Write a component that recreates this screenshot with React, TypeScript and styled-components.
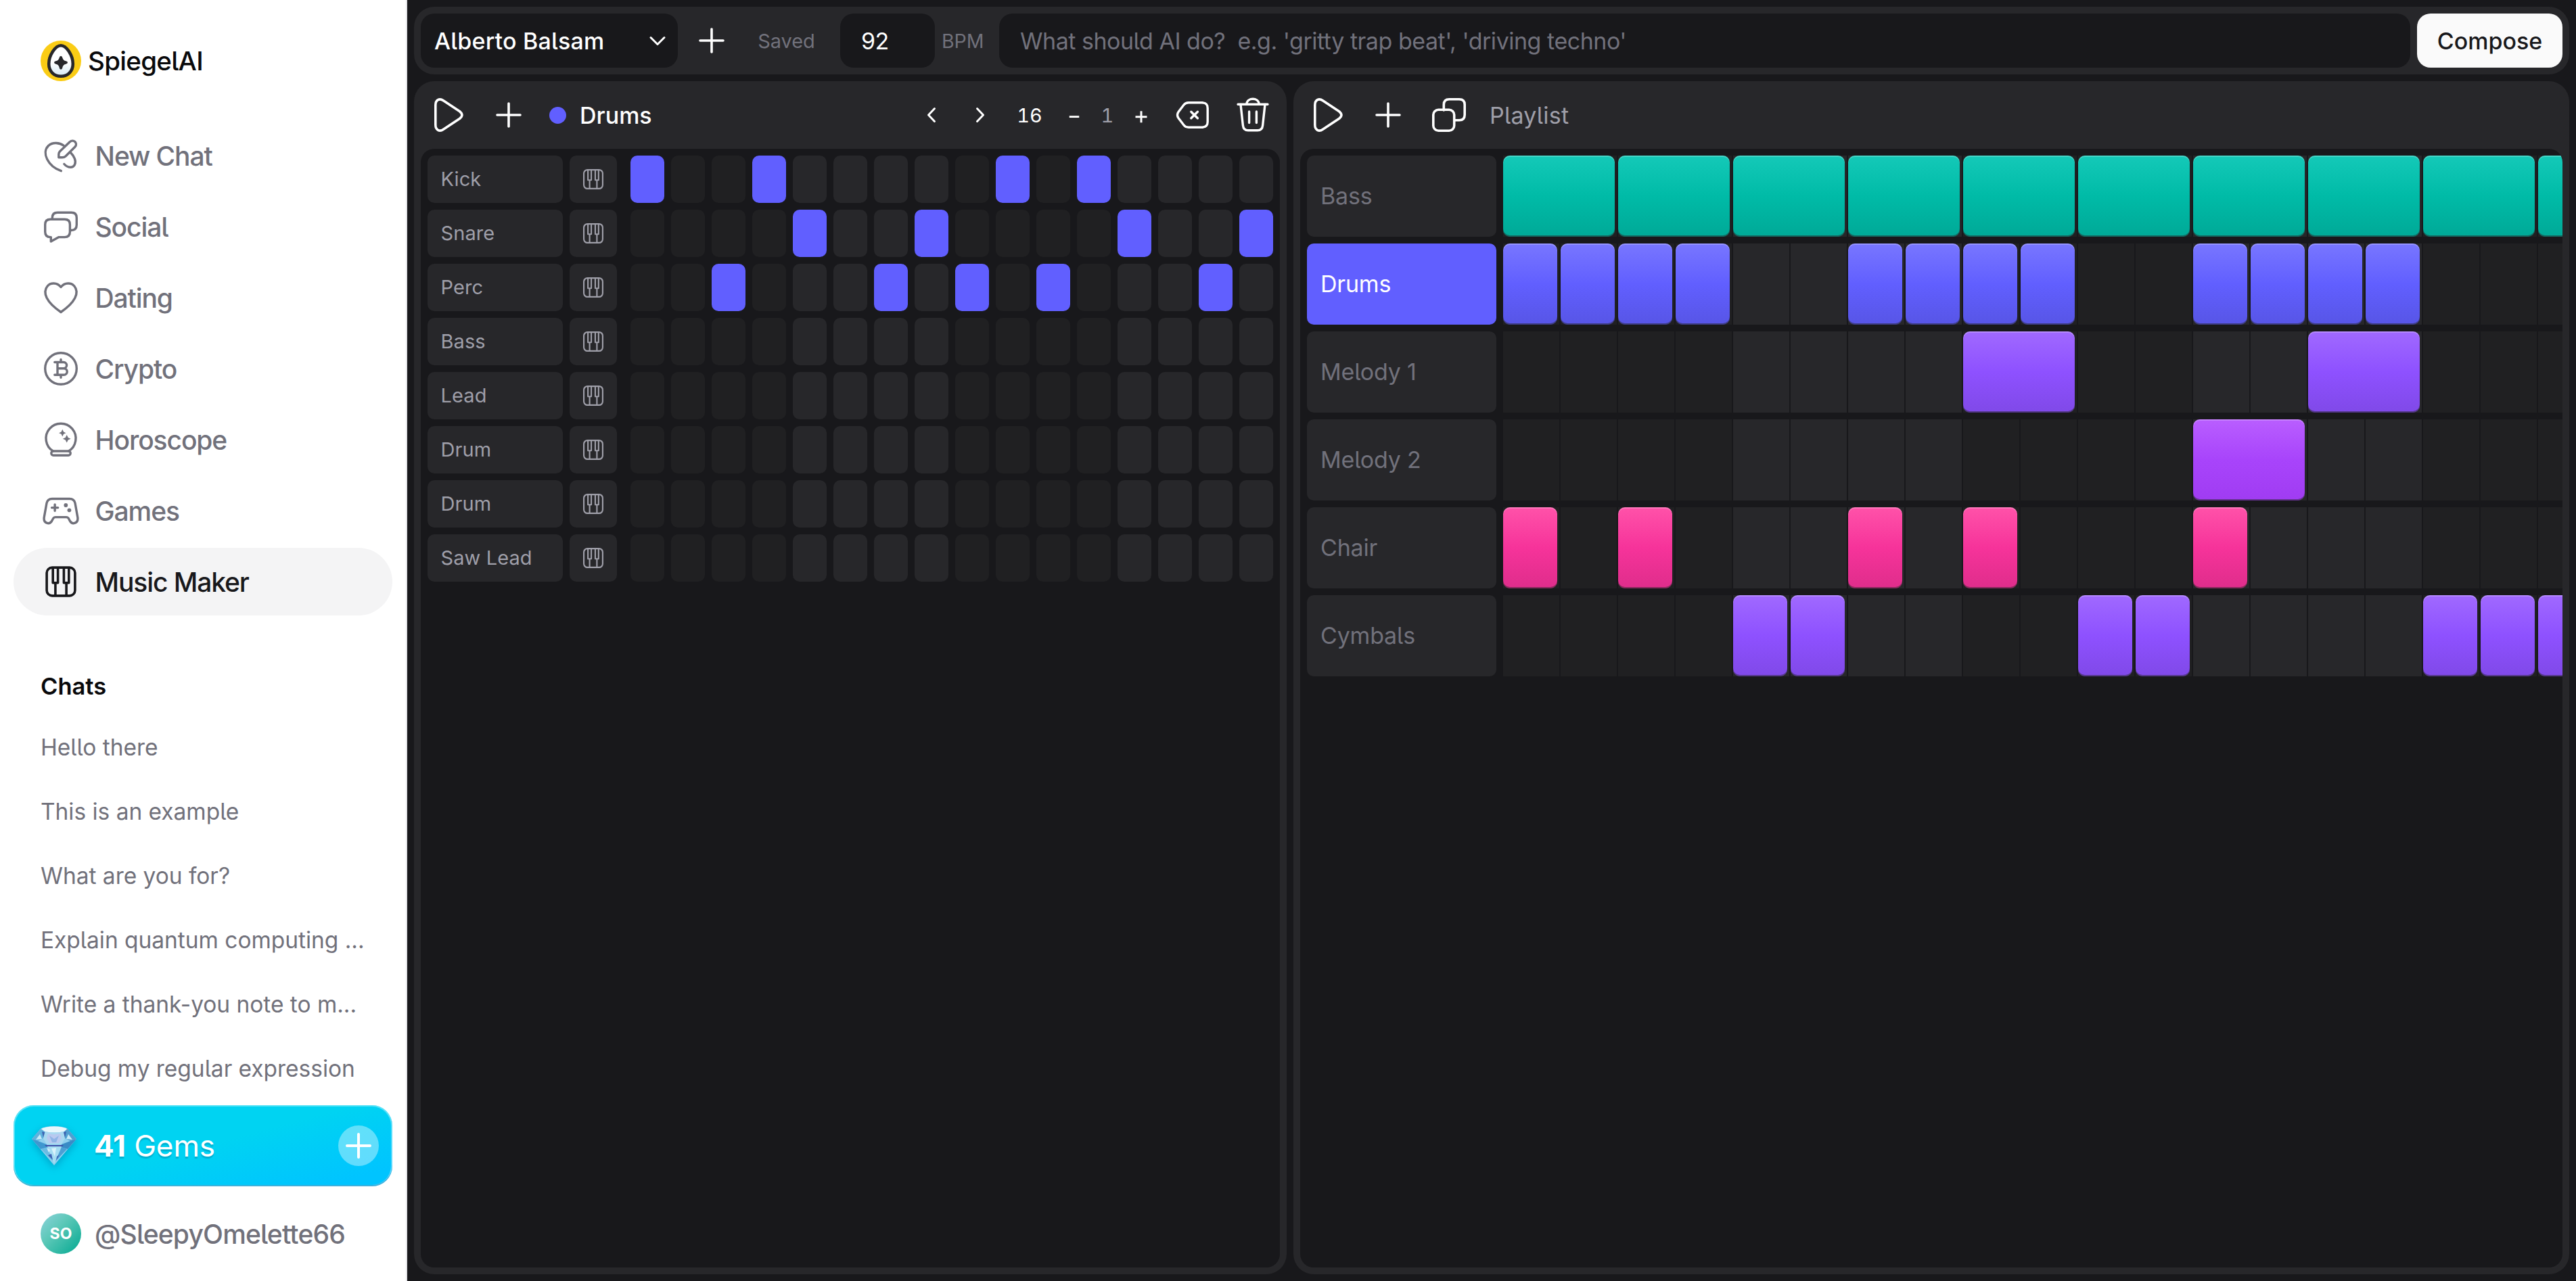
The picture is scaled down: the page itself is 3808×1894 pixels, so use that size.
import type { ReactNode } from 'react';
import styled, { createGlobalStyle, css } from 'styled-components';

const GlobalStyle = createGlobalStyle`
  * {
    box-sizing: border-box;
  }

  body {
    margin: 0;
    background: #18181b;
    font-family: Inter, 'Liberation Sans', sans-serif;
    font-feature-settings: 'cv05';
    -webkit-font-smoothing: antialiased;
  }

  button,
  input {
    font: inherit;
    font-feature-settings: inherit;
    border: 0;
    padding: 0;
    background: none;
    color: inherit;
  }
`;

/* ---------- icons ---------- */

const Icon = ({ size = 60, stroke = 3.4, children }: { size?: number; stroke?: number; children: ReactNode }) => (
  <svg
    width={size}
    height={size}
    viewBox="0 0 60 60"
    fill="none"
    stroke="currentColor"
    strokeWidth={stroke}
    strokeLinecap="round"
    strokeLinejoin="round"
  >
    {children}
  </svg>
);

const NewChatIcon = () => (
  <Icon>
    <path d="M34 15.2C28 11 18 9.5 11.5 15.5C1 26 11 46 30.3 52.7" />
    <path d="M26.8 32.8V28Q26.8 25.5 28.6 23.7L43.2 9.8C48.5 5 55.6 11.6 51 17L37 31Q35 32.8 32 32.8Z" />
    <path d="M44.7 26C49.7 31 53 38 50.5 43.3C48 49 40 48.5 34.8 42.5" />
  </Icon>
);

const SocialIcon = () => (
  <Icon>
    <path d="M17.3 19V17Q17.3 9.3 25 9.3H45.6Q53.3 9.3 53.3 17V27.5Q53.3 35.5 45 35.5" />
    <path d="M14.5 19.3H35.6Q43.4 19.3 43.4 27V37.8Q43.4 45.6 35.6 45.6H27L15.3 52V45.6H14.5Q6.7 45.6 6.7 37.8V27Q6.7 19.3 14.5 19.3Z" />
  </Icon>
);

const DatingIcon = () => (
  <Icon>
    <path d="M30 14.5C24 7 14.5 8 10.3 12.8C2 23 9 37 30 51.5C51 37 58 23 49.7 12.8C45.5 8 36 7 30 14.5Z" />
  </Icon>
);

const CryptoIcon = () => (
  <Icon>
    <circle cx="30" cy="30" r="23.3" />
    <path d="M20.8 20.5H34a4.6 4.6 0 0 1 0 9.2M25 20.5V39.3M25 29.8H34.5a4.75 4.75 0 0 1 0 9.5H20.8M30 16.5v4M30 39.3v4" />
  </Icon>
);

const HoroscopeIcon = () => (
  <Icon>
    <path d="M18.5 47A22 22 0 1 1 41.5 47" />
    <rect x="15.8" y="47" width="28.4" height="6.3" rx="3" />
    <path
      d="M32.3 14.8L34 18.6L37.5 20.2L34 21.8L32.3 25.6L30.6 21.8L27.1 20.2L30.6 18.6ZM38.7 22.9L40.7 26.9L44.6 28.7L40.7 30.5L38.7 34.5L36.7 30.5L32.8 28.7L36.7 26.9Z"
      fill="currentColor"
      stroke="none"
    />
  </Icon>
);

const GamesIcon = () => (
  <Icon>
    <path d="M17 12.5H43Q49.5 12.5 51 18.8L54.8 40C56 49 47 51 43.5 45.5L41.5 41.8Q40.3 39.6 38 39.6H22Q19.7 39.6 18.5 41.8L16.5 45.5C13 51 4 49 5.2 40L9 18.8Q10.5 12.5 17 12.5Z" />
    <path d="M16.5 25.6H25.7M21.1 21V30.2" />
    <circle cx="37.3" cy="22" r="2.9" fill="currentColor" stroke="none" />
    <circle cx="42.4" cy="29.3" r="2.9" fill="currentColor" stroke="none" />
  </Icon>
);

const PianoIcon = ({ size = 60, stroke = 3.6 }: { size?: number; stroke?: number }) => (
  <Icon size={size} stroke={stroke}>
    <rect x="9.1" y="9.1" width="41.8" height="41.8" rx="8" />
    <path d="M18.2 10V31.8H25.6V10M21.9 32V50M34.4 10V31.8H41.8V10M38.1 32V50" strokeLinecap="butt" />
  </Icon>
);

const PlusIcon = ({ stroke = 3.6 }: { stroke?: number }) => (
  <Icon stroke={stroke}>
    <path d="M13 30H47M30 13V47" />
  </Icon>
);

const PlayIcon = () => (
  <Icon stroke={3.6}>
    <path d="M11.8 15.5C11.8 7.8 17.6 4.6 23.5 8.7L47.3 24.5Q54.6 30 47.3 35.5L23.5 51.3C17.6 55.4 11.8 52.2 11.8 44.5Z" />
  </Icon>
);

const DuplicateIcon = () => (
  <Icon stroke={3.6}>
    <path d="M22.3 23V14.8Q22.3 6.8 30.3 6.8H45.2Q53.2 6.8 53.2 14.8V29.7Q53.2 37.7 45.2 37.7H38" />
    <rect x="6.8" y="22.3" width="30.9" height="30.9" rx="7.5" />
  </Icon>
);

const BackspaceIcon = () => (
  <Icon stroke={3.4}>
    <path d="M25 11.8H45Q53.2 11.8 53.2 20V40Q53.2 48.2 45 48.2H25Q20.5 48.2 18 45L10 34.5Q7 30 10 25.5L18 15Q20.5 11.8 25 11.8Z" />
    <path d="M28.8 25.2L38.4 34.8M38.4 25.2L28.8 34.8" />
  </Icon>
);

const TrashIcon = () => (
  <Icon stroke={3.4}>
    <path d="M8 14.3H52M20.8 13.5C21.8 3.8 38.2 3.8 39.2 13.5" />
    <path d="M12 14.5L15.4 45.5Q16.2 52.8 23 52.8H37Q43.8 52.8 44.6 45.5L48 14.5" />
    <path d="M24.6 25V41.5M35.4 25V41.5" />
  </Icon>
);

const ChevronIcon = ({ d }: { d: string }) => (
  <Icon size={60} stroke={3}>
    <path d={d} />
  </Icon>
);

const Logo = () => (
  <svg width="60" height="60" viewBox="0 0 60 60">
    <defs>
      <linearGradient id="egg" x1="0" y1="0" x2="0" y2="1">
        <stop offset="0.55" stopColor="#fff" />
        <stop offset="1" stopColor="#d5e9f3" />
      </linearGradient>
    </defs>
    <circle cx="30" cy="30" r="30" fill="#facc15" />
    <path
      d="M30 7.2C38.5 7.2 47.8 22.5 47.8 34.5C47.8 45.5 40 52.8 30 52.8C20 52.8 12.2 45.5 12.2 34.5C12.2 22.5 21.5 7.2 30 7.2Z"
      fill="url(#egg)"
      stroke="#27272a"
      strokeWidth="4.6"
    />
    <path
      d="M30 22.8Q31.8 22.8 32.4 25.6Q33.4 29.6 37.4 30.3Q40 30.9 40 32.5Q40 34.1 37.4 34.7Q33.4 35.4 32.4 39.4Q31.8 42.6 30 42.6Q28.2 42.6 27.6 39.4Q26.6 35.4 22.6 34.7Q20 34.1 20 32.5Q20 30.9 22.6 30.3Q26.6 29.6 27.6 25.6Q28.2 22.8 30 22.8Z"
      fill="#27272a"
    />
  </svg>
);

const GemSvg = styled.svg`
  display: block;
  overflow: visible;
  filter: drop-shadow(0 4px 6px rgba(0, 90, 140, 0.4));
`;

const Gem = () => (
  <GemSvg width="66" height="60" viewBox="0 0 66 60">
    <path d="M0 20L13 5Q20 1 33 1Q46 1 53 5L66 20L33 59Z" fill="#8fd0ee" />
    <path d="M0 20L13 5L20 9L17 19L9 23Z" fill="#5fb2dd" />
    <path d="M66 20L53 5L47 9L49 19L57 23Z" fill="#4f9fd0" />
    <path d="M14 5Q20 1.5 33 1.5Q46 1.5 52 5L48 9Q33 12 19 9Z" fill="#e8f7fc" />
    <path d="M20 9Q33 12 47 9L49 19L44 28H22L17 19Z" fill="#a9d8f0" />
    <path d="M24 12L33 13.5L42 12L44 19L40 26H26L22 19Z" fill="#b9c9ef" />
    <path d="M26 15L33 20L40 15L36 25H30Z" fill="#8fb4e6" />
    <path d="M0 20L9 23L22 28L24 32L13 35Z" fill="#3f97cf" />
    <path d="M66 20L57 23L44 28L43 32L53 35Z" fill="#3a8bc6" />
    <path d="M6 21L12 13L15 20ZM60 21L54 13L51 20Z" fill="#c6ecfa" />
    <path d="M15 9L19 10L17 18ZM51 9L47 10L49 18Z" fill="#3d62b0" />
    <path d="M19 29H47L45 31H21Z" fill="#3f4fa8" />
    <path d="M23 31H44L33 57Z" fill="#a5dcf2" />
    <path d="M14 35L23 32L31 53Z" fill="#6cbbe3" />
    <path d="M52 35L44 32L35 53Z" fill="#4c9fd4" />
    <path d="M24 44L29 42L31 51ZM41 43L37 46L36 52Z" fill="#3f62b4" />
    <path d="M29 34L36 33L34 46Z" fill="#d8f2fb" />
    <path d="M22 33L27 36L25 40Z" fill="#d3effa" />
  </GemSvg>
);

/* ---------- data ---------- */

const navItems = [
  { label: 'New Chat', icon: <NewChatIcon /> },
  { label: 'Social', icon: <SocialIcon /> },
  { label: 'Dating', icon: <DatingIcon /> },
  { label: 'Crypto', icon: <CryptoIcon /> },
  { label: 'Horoscope', icon: <HoroscopeIcon /> },
  { label: 'Games', icon: <GamesIcon /> },
  { label: 'Music Maker', icon: <PianoIcon />, active: true },
];

const chats = [
  'Hello there',
  'This is an example',
  'What are you for?',
  'Explain quantum computing ...',
  'Write a thank-you note to m...',
  'Debug my regular expression',
];

const steps = Array.from({ length: 16 }, (_, i) => i);

const instruments = [
  { name: 'Kick', on: [0, 3, 9, 11] },
  { name: 'Snare', on: [4, 7, 12, 15] },
  { name: 'Perc', on: [2, 6, 8, 10, 14] },
  { name: 'Bass', on: [] },
  { name: 'Lead', on: [] },
  { name: 'Drum', on: [] },
  { name: 'Drum', on: [] },
  { name: 'Saw Lead', on: [] },
];

const bars = Array.from({ length: 20 }, (_, i) => i);

// top, middle and bottom shade of a clip
const teal = ['#14c9b8', '#00bba7', '#00a997'];
const indigo = ['#7876ff', '#615fff', '#5755e6'];
const violet = ['#a069ff', '#8e51ff', '#8049e8'];
const purple = ['#b95eff', '#a844fb', '#a03cf2'];
const pink = ['#ff52a9', '#f6339a', '#df2d8b'];

const tracks = [
  { name: 'Bass', shades: teal, length: 2, at: [0, 2, 4, 6, 8, 10, 12, 14, 16, 18] },
  { name: 'Drums', shades: indigo, length: 1, at: [0, 1, 2, 3, 6, 7, 8, 9, 12, 13, 14, 15], active: true },
  { name: 'Melody 1', shades: violet, length: 2, at: [8, 14] },
  { name: 'Melody 2', shades: purple, length: 2, at: [12] },
  { name: 'Chair', shades: pink, length: 1, at: [0, 2, 6, 8, 12] },
  { name: 'Cymbals', shades: violet, length: 1, at: [4, 5, 10, 11, 16, 17, 18] },
];

/* ---------- page ---------- */

const App = () => {
  return (
    <Page>
      <GlobalStyle />
      <Sidebar>
        <Brand>
          <Logo />
          SpiegelAI
        </Brand>
        <Nav>
          {navItems.map((item) => (
            <NavItem $active={item.active} key={item.label}>
              {item.icon}
              {item.label}
            </NavItem>
          ))}
        </Nav>
        <ChatsTitle>Chats</ChatsTitle>
        <ChatList>
          {chats.map((chat) => (
            <ChatItem key={chat}>{chat}</ChatItem>
          ))}
        </ChatList>
        <GemsButton>
          <Gem />
          <GemsText>
            <b>41</b> Gems
          </GemsText>
          <GemsPlus>
            <PlusIcon stroke={4} />
          </GemsPlus>
        </GemsButton>
        <User>
          <Avatar>SO</Avatar>
          @SleepyOmelette66
        </User>
      </Sidebar>

      <Main>
        <Toolbar>
          <SongSelect>
            Alberto Balsam
            <ChevronIcon d="M20 25.5L30 35.5L40 25.5" />
          </SongSelect>
          <IconButton>
            <PlusIcon />
          </IconButton>
          <Saved>Saved</Saved>
          <BpmInput defaultValue="92" />
          <BpmLabel>BPM</BpmLabel>
          <Prompt placeholder={"What should AI do?\u00a0 e.g. 'gritty trap beat', 'driving techno'"} />
          <Compose>Compose</Compose>
        </Toolbar>

        <Panels>
          <Panel $width={1290}>
            <PanelHeader>
              <IconButton>
                <PlayIcon />
              </IconButton>
              <IconButton>
                <PlusIcon />
              </IconButton>
              <Dot />
              <PanelTitle $weight={500}>Drums</PanelTitle>
              <Controls>
                <Control $width={72}>
                  <ChevronIcon d="M34.5 20.5L25.5 30L34.5 39.5" />
                </Control>
                <Control $width={72}>
                  <ChevronIcon d="M25.5 20.5L34.5 30L25.5 39.5" />
                </Control>
                <Control $width={74}>16</Control>
                <Control $width={58}>
                  <Icon stroke={3}>
                    <path d="M22.5 32.7H37.5" strokeLinecap="butt" />
                  </Icon>
                </Control>
                <Control $width={40} $muted>
                  1
                </Control>
                <Control $width={60}>
                  <Icon stroke={3}>
                    <path d="M21.5 32.7H38.5M30 24.2V41.2" strokeLinecap="butt" />
                  </Icon>
                </Control>
              </Controls>
              <IconButton>
                <BackspaceIcon />
              </IconButton>
              <IconButton>
                <TrashIcon />
              </IconButton>
            </PanelHeader>
            <PanelBody>
              {instruments.map((row, r) => (
                <StepRow key={r}>
                  <Instrument>{row.name}</Instrument>
                  <PianoButton>
                    <PianoIcon size={40} stroke={3.2} />
                  </PianoButton>
                  {steps.map((i) => (
                    <Step $on={row.on.some((n) => n === i)} $bright={i % 8 > 3} key={i} />
                  ))}
                </StepRow>
              ))}
            </PanelBody>
          </Panel>

          <Panel>
            <PanelHeader>
              <IconButton>
                <PlayIcon />
              </IconButton>
              <IconButton>
                <PlusIcon />
              </IconButton>
              <IconButton>
                <DuplicateIcon />
              </IconButton>
              <PlaylistTitle>Playlist</PlaylistTitle>
            </PanelHeader>
            <PanelBody>
              {tracks.map((track) => (
                <TrackRow key={track.name}>
                  <TrackLabel $active={track.active}>{track.name}</TrackLabel>
                  <Lane>
                    {bars.map((i) => (
                      <Bar $bright={i % 8 > 3} $col={i + 1} key={i} />
                    ))}
                    {track.at.map((i) => (
                      <Clip $shades={track.shades} $col={i + 1} $span={track.length} key={i} />
                    ))}
                  </Lane>
                </TrackRow>
              ))}
            </PanelBody>
          </Panel>
        </Panels>
      </Main>
    </Page>
  );
};

const Page = styled.div`
  display: flex;
  width: 3808px;
  height: 1894px;
  overflow: hidden;
  background: #18181b;
`;

const Sidebar = styled.aside`
  display: flex;
  flex-direction: column;
  flex: none;
  width: 602px;
  padding: 60px 20px 40px;
  background: #fff;
  border-right: 2px solid #e4e4e7;
`;

const Brand = styled.div`
  display: flex;
  align-items: center;
  gap: 10px;
  height: 60px;
  padding-left: 40px;
  font-size: 38.5px;
  font-weight: 500;
  letter-spacing: -0.7px;
  color: #09090b;
`;

const Nav = styled.nav`
  display: flex;
  flex-direction: column;
  gap: 5px;
  margin-top: 60px;
`;

const NavItem = styled.a<{ $active?: boolean }>`
  display: flex;
  align-items: center;
  gap: 20.5px;
  height: 100px;
  padding-left: 40px;
  border-radius: 50px;
  font-size: 39px;
  font-weight: 500;
  letter-spacing: -1.1px;
  color: #71717b;

  ${(props) =>
    props.$active &&
    css`
      background: #f4f4f5;
      color: #18181b;
    `}
`;

const ChatsTitle = styled.h2`
  margin: 60px 0 0;
  padding-left: 40px;
  font-size: 34.5px;
  font-weight: 600;
  line-height: 90px;
  letter-spacing: 0;
  color: #09090b;
`;

const ChatList = styled.div`
  display: flex;
  flex-direction: column;
  flex: 1;
  gap: 5px;
  overflow: hidden;
`;

const ChatItem = styled.a`
  flex: none;
  padding-left: 40px;
  font-size: 33.5px;
  line-height: 90px;
  letter-spacing: -0.03px;
  white-space: nowrap;
  color: #71717b;
`;

const GemsButton = styled.button`
  display: flex;
  align-items: center;
  flex: none;
  height: 120px;
  padding: 0 20px 0 27px;
  border-radius: 30px;
  background: linear-gradient(165deg, #00d3f2 50%, #00c4ff 90%);
  box-shadow:
    inset 0 -2px 0 rgba(0, 80, 140, 0.3),
    inset 0 0 0 2px rgba(255, 255, 255, 0.35);
  color: #fff;
`;

const GemsText = styled.span`
  flex: 1;
  margin-left: 26px;
  font-size: 44px;
  letter-spacing: -0.1px;
  text-align: left;
  text-shadow: 0 3px 1px rgba(0, 60, 90, 0.22);

  b {
    font-weight: 700;
  }
`;

const GemsPlus = styled.span`
  display: flex;
  width: 60px;
  height: 60px;
  border-radius: 50%;
  background: rgba(255, 255, 255, 0.38);
`;

const User = styled.div`
  display: flex;
  align-items: center;
  flex: none;
  gap: 20px;
  height: 60px;
  margin-top: 40px;
  padding-left: 40px;
  font-size: 39px;
  font-weight: 500;
  letter-spacing: -0.8px;
  color: #71717b;
`;

const Avatar = styled.span`
  display: flex;
  align-items: center;
  justify-content: center;
  flex: none;
  width: 60px;
  height: 60px;
  border-radius: 50%;
  background: linear-gradient(135deg, #8fd3dc 0%, #5cc8b8 40%, #2fb8a4 70%, #00a78f 100%);
  font-size: 23px;
  font-weight: 700;
  letter-spacing: 0;
  color: #fff;
`;

const Main = styled.main`
  display: flex;
  flex-direction: column;
  flex: 1;
  gap: 10px;
  min-width: 0;
  padding: 10px;
`;

const Toolbar = styled.div`
  display: flex;
  align-items: center;
  height: 100px;
  padding: 10px;
  border-radius: 30px;
  background: #27272a;
  color: #fff;
  font-size: 34px;

  > * {
    flex: none;
  }
`;

const SongSelect = styled.button`
  display: flex;
  align-items: center;
  justify-content: space-between;
  width: 380px;
  height: 80px;
  margin-right: 10px;
  padding-left: 20px;
  border-radius: 20px;
  background: #18181b;
  font-weight: 500;
  letter-spacing: 0.2px;
`;

const IconButton = styled.button`
  display: flex;
  align-items: center;
  justify-content: center;
  flex: none;
  width: 80px;
  height: 80px;
  color: #fff;
`;

const Saved = styled.span`
  width: 150px;
  padding-right: 9px;
  font-size: 29px;
  letter-spacing: -0.1px;
  text-align: center;
  color: #71717b;
`;

const BpmInput = styled.input`
  width: 140px;
  height: 80px;
  padding: 0 31px;
  border-radius: 20px;
  background: #18181b;
  letter-spacing: -0.5px;
  color: #fff;
`;

const BpmLabel = styled.span`
  width: 95px;
  padding-left: 10px;
  font-size: 28.5px;
  letter-spacing: -0.1px;
  color: #71717b;
`;

const Prompt = styled.input`
  && {
    flex: 1;
  }
  height: 80px;
  margin-right: 10px;
  padding: 0 31px;
  border-radius: 20px;
  background: #18181b;
  letter-spacing: -0.48px;

  &::placeholder {
    color: #71717b;
    opacity: 1;
  }
`;

const Compose = styled.button`
  width: 215px;
  height: 80px;
  border-radius: 20px;
  background: #fafafa;
  color: #18181b;
  font-weight: 500;
  letter-spacing: 0;
`;

const Panels = styled.div`
  display: flex;
  flex: 1;
  gap: 10px;
  min-height: 0;
`;

const Panel = styled.section<{ $width?: number }>`
  display: flex;
  flex-direction: column;
  flex: ${(props) => (props.$width ? `0 0 ${props.$width}px` : '1')};
  min-width: 0;
  padding: 0 10px 10px;
  border-radius: 30px;
  background: #27272a;
`;

const PanelHeader = styled.header`
  display: flex;
  align-items: center;
  flex: none;
  gap: 10px;
  height: 100px;
`;

const Dot = styled.span`
  width: 25px;
  height: 25px;
  margin: 0 10px;
  border-radius: 50%;
  background: #615fff;
`;

const PanelTitle = styled.h3<{ $weight: number }>`
  margin: 0;
  font-size: 34px;
  font-weight: ${(props) => props.$weight};
  letter-spacing: 0;
  color: #fff;
`;

const PlaylistTitle = styled(PanelTitle).attrs({ $weight: 400 })`
  margin-left: 10px;
  letter-spacing: 0.2px;
  color: #9f9fa9;
`;

const Controls = styled.div`
  display: flex;
  align-items: center;
  justify-content: flex-end;
  flex: 1;
  margin-right: -5px;
`;

const Control = styled.button<{ $width: number; $muted?: boolean }>`
  display: flex;
  align-items: center;
  justify-content: center;
  width: ${(props) => props.$width}px;
  height: 80px;
  font-size: 29px;
  font-variant-numeric: tabular-nums;
  color: ${(props) => (props.$muted ? '#9f9fa9' : '#fff')};
`;

const PanelBody = styled.div`
  display: flex;
  flex-direction: column;
  flex: 1;
  gap: 10px;
  min-height: 0;
  padding: 10px 0 10px 10px;
  border-radius: 20px;
  background: #18181b;
  overflow: hidden;
`;

const StepRow = styled.div`
  display: flex;
  gap: 10px;
  height: 70px;
`;

const Instrument = styled.div`
  width: 200px;
  padding-left: 19.5px;
  border-radius: 10px;
  background: #27272a;
  font-size: 29px;
  line-height: 70px;
  letter-spacing: 0.1px;
  color: #9f9fa9;
`;

const PianoButton = styled.button`
  display: flex;
  align-items: center;
  justify-content: center;
  width: 70px;
  margin-right: 10px;
  border-radius: 10px;
  background: #27272a;
  color: #9f9fa9;
`;

const Step = styled.div<{ $on: boolean; $bright: boolean }>`
  width: 50px;
  border-radius: 10px;
  background: ${(props) => (props.$on ? '#615fff' : props.$bright ? '#27272a' : '#202022')};
`;

const TrackRow = styled.div`
  display: flex;
  flex: none;
  gap: 10px;
  height: 120px;
`;

const TrackLabel = styled.div<{ $active?: boolean }>`
  flex: none;
  width: 280px;
  padding-left: 20px;
  border-radius: 10px;
  background: ${(props) => (props.$active ? '#615fff' : '#27272a')};
  font-size: 34px;
  line-height: 120px;
  letter-spacing: -0.2px;
  color: ${(props) => (props.$active ? '#fff' : '#71717b')};
`;

const Lane = styled.div`
  display: grid;
  grid-template-columns: repeat(20, 85px);
  grid-template-rows: 120px;
`;

const Bar = styled.div<{ $bright: boolean; $col: number }>`
  grid-area: 1 / ${(props) => props.$col};
  margin-right: 2px;
  background: ${(props) => (props.$bright ? '#27272a' : '#202022')};
`;

const Clip = styled.div<{ $shades: string[]; $col: number; $span: number }>`
  grid-area: 1 / ${(props) => props.$col} / auto / span ${(props) => props.$span};
  margin-right: 5px;
  border-radius: 10px;
  background: linear-gradient(${(props) => props.$shades.join(', ')});
  box-shadow:
    inset 0 2px 0 rgba(255, 255, 255, 0.22),
    inset 0 -2px 0 rgba(39, 39, 42, 0.5);
`;

export default App;
